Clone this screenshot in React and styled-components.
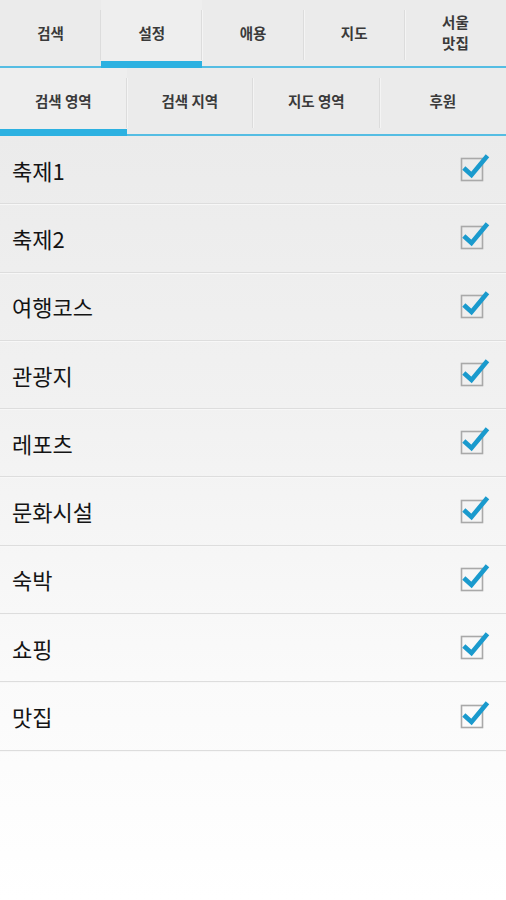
import React from "react";
import styled, { createGlobalStyle } from "styled-components";

const Global = createGlobalStyle`
  html, body { margin: 0; padding: 0; }
  body {
    width: 506px;
    min-height: 900px;
    background: linear-gradient(180deg, #e8e8e8 0%, #f1f1f1 45%, #fafafa 75%, #ffffff 100%);
    font-family: "Noto Sans CJK KR", "Noto Sans", sans-serif;
    color: #222;
  }
`;

const Page = styled.div`
  display: flex;
  flex-direction: column;
  width: 506px;
  min-height: 900px;
`;

const TabBar = styled.div`
  display: grid;
  grid-template-columns: repeat(${(p) => p.$count}, 1fr);
  height: ${(p) => p.$height}px;
  background: #ebebeb;
  border-bottom: 2px solid #55bde3;
  box-sizing: border-box;
`;

const Tab = styled.div`
  position: relative;
  display: flex;
  align-items: center;
  justify-content: center;
  text-align: center;
  font-size: 14.5px;
  font-weight: 700;
  line-height: 21px;
  color: #3a3a3a;
  background: ${(p) => (p.$active ? "#eeeeee" : "transparent")};
  padding-bottom: 2px;
  &::after {
    content: "";
    display: ${(p) => (p.$last ? "none" : "block")};
    position: absolute;
    right: 0;
    top: 10px;
    bottom: 6px;
    width: 1px;
    background: #dcdcdc;
    box-shadow: 1px 0 0 #f4f4f4;
  }
  &::before {
    content: "";
    display: ${(p) => (p.$active ? "block" : "none")};
    position: absolute;
    left: 0;
    right: 0;
    bottom: -2px;
    height: 7px;
    background: #2cb1e1;
  }
`;

const List = styled.div`
  display: flex;
  flex-direction: column;
`;

const Row = styled.div`
  display: flex;
  align-items: center;
  justify-content: space-between;
  height: 68.3px;
  box-sizing: border-box;
  padding: 0 16px 0 12px;
  border-bottom: 1px solid #dddddd;
  box-shadow: 0 1px 0 #f7f7f7;
`;

const Label = styled.span`
  font-size: 22px;
  font-weight: 400;
  color: #141414;
`;

const Check = () => (
  <svg width="30" height="30" viewBox="0 0 30 30">
    <rect x="1.5" y="6.5" width="21" height="22" fill="none" stroke="#a9a9a9" strokeWidth="1.6" />
    <path d="M5.5 17.5 L11.5 23 L26 5.5" fill="none" stroke="#1a9acd" strokeWidth="4.6" strokeLinecap="square" strokeLinejoin="miter" />
  </svg>
);

const CheckWrap = styled.div`
  display: flex;
  width: 30px;
  height: 30px;
  margin-top: -5px;
`;

const topTabs = ["검색", "설정", "애용", "지도", "서울\n맛집"];
const subTabs = ["검색 영역", "검색 지역", "지도 영역", "후원"];
const items = ["축제1", "축제2", "여행코스", "관광지", "레포츠", "문화시설", "숙박", "쇼핑", "맛집"];

export default function App() {
  return (
    <>
      <Global />
      <Page>
        <TabBar $count={5} $height={68}>
          {topTabs.map((t, i) => (
            <Tab key={t} $active={i === 1} $last={i === topTabs.length - 1}>
              <span style={{ whiteSpace: "pre-line" }}>{t}</span>
            </Tab>
          ))}
        </TabBar>
        <TabBar $count={4} $height={68}>
          {subTabs.map((t, i) => (
            <Tab key={t} $active={i === 0} $last={i === subTabs.length - 1}>
              {t}
            </Tab>
          ))}
        </TabBar>
        <List>
          {items.map((it) => (
            <Row key={it}>
              <Label>{it}</Label>
              <CheckWrap>
                <Check />
              </CheckWrap>
            </Row>
          ))}
        </List>
      </Page>
    </>
  );
}
